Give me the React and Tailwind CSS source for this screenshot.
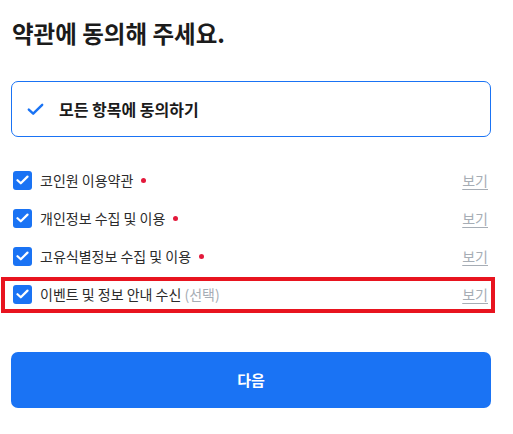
import React, { useState } from 'react';

const items = [
  { id: 'terms', label: '코인원 이용약관', required: true },
  { id: 'privacy', label: '개인정보 수집 및 이용', required: true },
  { id: 'unique', label: '고유식별정보 수집 및 이용', required: true },
  { id: 'event', label: '이벤트 및 정보 안내 수신', required: false },
];

const CheckBox = ({ checked, onClick }) => (
  <button
    type="button"
    onClick={onClick}
    className={`flex h-[19px] w-[19px] shrink-0 items-center justify-center rounded-[3px] ${checked ? 'bg-[#1a73f4]' : 'border border-[#c5cbd3] bg-white'}`}
  >
    {checked && (
      <svg width="13" height="10" viewBox="0 0 13 10" fill="none">
        <path d="M1.5 5.2 L4.8 8.3 L11.5 1.6" stroke="white" strokeWidth="2.2" strokeLinecap="round" strokeLinejoin="round" />
      </svg>
    )}
  </button>
);

const App = () => {
  const [checked, setChecked] = useState({ terms: true, privacy: true, unique: true, event: true });
  const allChecked = items.every(i => checked[i.id]);

  const toggleAll = () => {
    const next = !allChecked;
    setChecked({ terms: next, privacy: next, unique: next, event: next });
  };

  return (
    <div className="relative min-h-[434px] w-[513px] bg-white px-[11px] pt-[19px] font-['Noto_Sans_CJK_KR','Noto_Sans',sans-serif]">
      <h1 className="pl-px text-[23.5px] font-bold leading-[28px] text-[#1b1b1b]">약관에 동의해 주세요.</h1>

      {/* 전체 동의 */}
      <button
        type="button"
        onClick={toggleAll}
        className="mt-[34px] flex h-[56px] w-[480px] items-center rounded-[7px] border border-[#1a73f4] pl-[15px] text-left"
      >
        <svg width="17" height="13" viewBox="0 0 17 13" fill="none" className={allChecked ? 'text-[#1a73f4]' : 'text-[#c5cbd3]'}>
          <path d="M1.8 6.6 L6.2 10.7 L15.2 1.8" stroke="currentColor" strokeWidth="2.4" strokeLinecap="round" strokeLinejoin="round" />
        </svg>
        <span className="ml-[15px] text-[16px] font-bold text-[#1b1b1b]">모든 항목에 동의하기</span>
      </button>

      {/* 개별 항목 */}
      <ul className="mt-[24px] flex w-[480px] flex-col">
        {items.map(item => (
          <li key={item.id} className="flex h-[38px] items-center pl-[2px] pr-[3px]">
            <CheckBox
              checked={checked[item.id]}
              onClick={() => setChecked({ ...checked, [item.id]: !checked[item.id] })}
            />
            <span className="ml-[8px] text-[14px] text-[#2b2b2b]">
              {item.label}
              {!item.required && <span className="text-[#a6adb5]"> (선택)</span>}
            </span>
            {item.required && <span className="ml-[8px] h-[5px] w-[5px] rounded-full bg-[#e3193b]" />}
            <a href="#" className="ml-auto text-[14px] text-[#a6adb5] underline underline-offset-[3px]">보기</a>
          </li>
        ))}
      </ul>

      <button
        type="button"
        className="mt-[39px] flex h-[56px] w-[480px] items-center justify-center rounded-[7px] bg-[#1a73f4] text-[15px] font-bold text-white"
      >
        다음
      </button>

      {/* 선택 항목 강조 */}
      <div className="pointer-events-none absolute left-[1px] top-[277px] h-[36px] w-[494px] border-4 border-[#e8141f]" />
    </div>
  );
};

export default App;
